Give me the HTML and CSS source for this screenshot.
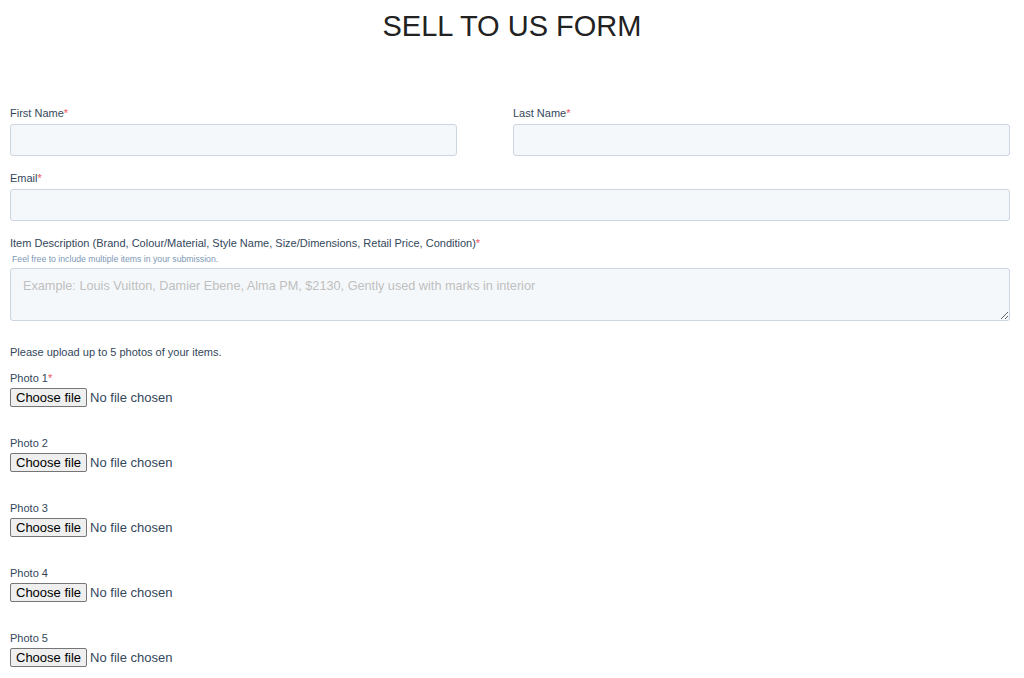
FILE: index.html
```html
<!DOCTYPE html>
<html lang="en">
<head>
    <meta charset="UTF-8">
    <meta name="viewport" content="width=device-width, initial-scale=1.0">
    <title>Sell To Us Form</title>
    <link rel="stylesheet" href="styles.css">
</head>
<body>
    <h1 class="form-title">SELL TO US FORM</h1>

    <form class="sell-form">
        <div class="row-2">
            <div class="field">
                <label>First Name<span class="req">*</span></label>
                <input class="text-input" type="text">
            </div>
            <div class="field">
                <label>Last Name<span class="req">*</span></label>
                <input class="text-input" type="text">
            </div>
        </div>

        <div class="field">
            <label>Email<span class="req">*</span></label>
            <input class="text-input" type="email">
        </div>

        <div class="field">
            <label>Item Description (Brand, Colour/Material, Style Name, Size/Dimensions, Retail Price, Condition)<span class="req">*</span></label>
            <div class="hint">Feel free to include multiple items in your submission.</div>
            <textarea class="text-input text-area" placeholder="Example: Louis Vuitton, Damier Ebene, Alma PM, $2130, Gently used with marks in interior"></textarea>
        </div>

        <p class="upload-note">Please upload up to 5 photos of your items.</p>

        <div class="photo-field">
            <label>Photo 1<span class="req">*</span></label>
            <label class="file-picker">
                <input type="file">
                <span class="file-btn">Choose file</span>
                <span class="file-name">No file chosen</span>
            </label>
        </div>
        <div class="photo-field">
            <label>Photo 2</label>
            <label class="file-picker">
                <input type="file">
                <span class="file-btn">Choose file</span>
                <span class="file-name">No file chosen</span>
            </label>
        </div>
        <div class="photo-field">
            <label>Photo 3</label>
            <label class="file-picker">
                <input type="file">
                <span class="file-btn">Choose file</span>
                <span class="file-name">No file chosen</span>
            </label>
        </div>
        <div class="photo-field">
            <label>Photo 4</label>
            <label class="file-picker">
                <input type="file">
                <span class="file-btn">Choose file</span>
                <span class="file-name">No file chosen</span>
            </label>
        </div>
        <div class="photo-field">
            <label>Photo 5</label>
            <label class="file-picker">
                <input type="file">
                <span class="file-btn">Choose file</span>
                <span class="file-name">No file chosen</span>
            </label>
        </div>
    </form>

    <script>
        // show the picked file name next to the button
        document.querySelectorAll('.file-picker input').forEach((input) => {
            input.addEventListener('change', () => {
                const name = input.files.length ? input.files[0].name : 'No file chosen';
                input.parentElement.querySelector('.file-name').textContent = name;
            });
        });
    </script>
</body>
</html>
```

FILE: styles.css
```css
body {
    margin: 0;
    padding: 0 10px;
    font-family: "Liberation Sans", Arial, sans-serif;
    color: #33475b;
    background: #fff;
}

.form-title {
    margin: 0;
    padding-top: 10px;
    height: 106px;
    box-sizing: border-box;
    text-align: center;
    font-size: 29px;
    font-weight: normal;
    line-height: 32px;
    color: #222;
}

.sell-form {
    width: 1000px;
}

.row-2 {
    display: grid;
    grid-template-columns: 447px 497px;
    column-gap: 56px;
}

.field {
    margin-bottom: 15px;
}

.field label,
.photo-field > label {
    display: block;
    font-size: 11px;
    line-height: 14px;
    margin-bottom: 4px;
}

.photo-field > label {
    margin-bottom: 5px;
}

.req {
    color: #f2545b;
}

.text-input {
    display: block;
    width: 100%;
    height: 32px;
    box-sizing: border-box;
    border: 1px solid #cbd6e2;
    border-radius: 3px;
    background: #f5f8fa;
    font-family: "Liberation Sans", Arial, sans-serif;
    font-size: 12.7px;
    color: #33475b;
    padding: 0 12px;
}

.hint {
    font-size: 8.7px;
    line-height: 10px;
    color: #7c98b6;
    margin: 0 0 4px 2px;
}

.text-area {
    height: 53px;
    padding: 10px 12px;
    resize: vertical;
}

.text-area::placeholder {
    color: #bfbfbf;
}

.upload-note {
    font-size: 11px;
    line-height: 14px;
    margin: 24px 0 12px;
}

.photo-field {
    height: 65px;
}

.file-picker {
    display: inline-flex;
    align-items: center;
    gap: 4px;
    cursor: pointer;
}

.file-picker input {
    display: none;
}

.file-btn {
    font-size: 13px;
    line-height: 15px;
    color: #000;
    background: #efefef;
    border: 1px solid #767676;
    border-radius: 2px;
    padding: 1px 5px;
}

.file-name {
    font-size: 13px;
    color: #33475b;
}
```
